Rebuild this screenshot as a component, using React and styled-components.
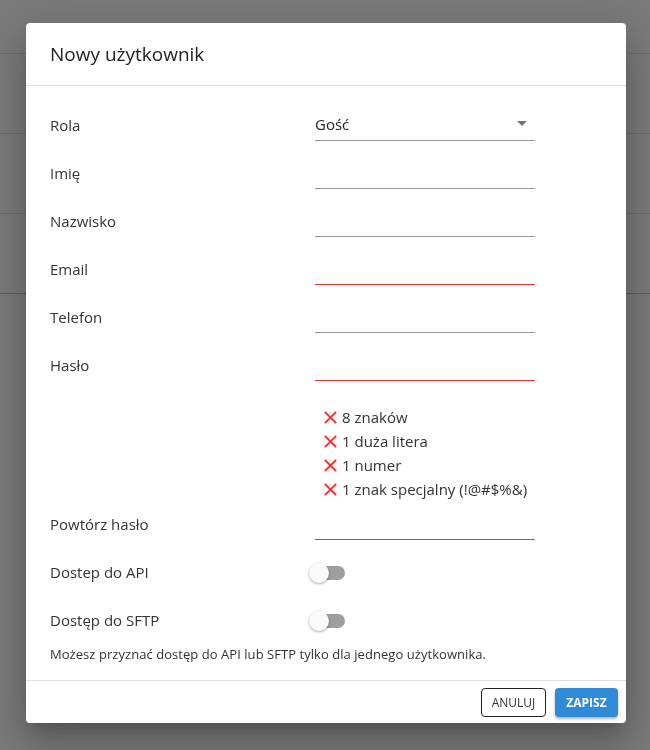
import React from 'react'
import styled, { createGlobalStyle } from 'styled-components'

const GlobalStyle = createGlobalStyle`
  html, body {
    margin: 0;
    padding: 0;
    height: 100%;
    background: #f4f4f4;
    font-family: 'Open Sans', 'Noto Sans', 'Liberation Sans', sans-serif;
    color: #333;
  }
  * { box-sizing: border-box; }
`

const fields = [
  { label: 'Imię', error: false },
  { label: 'Nazwisko', error: false },
  { label: 'Email', error: true },
  { label: 'Telefon', error: false },
  { label: 'Hasło', error: true },
]

const rules = ['8 znaków', '1 duża litera', '1 numer', '1 znak specjalny (!@#$%&)']

const Cross = () => (
  <svg width="15" height="15" viewBox="0 0 16 16">
    <path d="M2 2 L14 14 M14 2 L2 14" stroke="#e53935" strokeWidth="2.2" strokeLinecap="butt" />
  </svg>
)

const Caret = () => (
  <svg width="10" height="5" viewBox="0 0 10 5">
    <path d="M0 0 L10 0 L5 5 Z" fill="#757575" />
  </svg>
)

const App = () => (
  <>
    <GlobalStyle />
    <Page>
      <PageHead>
        <HeadCell>Właściciel</HeadCell>
      </PageHead>
      <PageRow />
      <PageRow />
      <PageRow dark />
    </Page>
    <Overlay>
      <Dialog>
        <Header>Nowy użytkownik</Header>
        <Body>
          <Row>
            <Label>Rola</Label>
            <Field>
              <Value>Gość</Value>
              <Caret />
            </Field>
          </Row>
          {fields.map((f) => (
            <Row key={f.label}>
              <Label>{f.label}</Label>
              <Field error={f.error} />
            </Row>
          ))}
          <Rules>
            {rules.map((r) => (
              <Rule key={r}>
                <Cross />
                <span>{r}</span>
              </Rule>
            ))}
          </Rules>
          <Row>
            <Label>Powtórz hasło</Label>
            <Field error />
          </Row>
          <Row>
            <Label>Dostep do API</Label>
            <Toggle>
              <Track />
              <Thumb />
            </Toggle>
          </Row>
          <Row>
            <Label>Dostęp do SFTP</Label>
            <Toggle>
              <Track />
              <Thumb />
            </Toggle>
          </Row>
          <Note>Możesz przyznać dostęp do API lub SFTP tylko dla jednego użytkownika.</Note>
        </Body>
        <Footer>
          <OutlineButton>ANULUJ</OutlineButton>
          <PrimaryButton>ZAPISZ</PrimaryButton>
        </Footer>
      </Dialog>
    </Overlay>
  </>
)

const Page = styled.div`
  display: flex;
  flex-direction: column;
`
const PageHead = styled.div`
  height: 54px;
  border-bottom: 1px solid #d8d8d8;
  display: flex;
  align-items: flex-start;
  padding: 20px 0 0 437px;
`
const HeadCell = styled.span`
  font-size: 12px;
  font-weight: 600;
  color: #222;
`
const PageRow = styled.div`
  height: 80px;
  border-bottom: 1px solid ${(p) => (p.dark ? '#bdbdbd' : '#d8d8d8')};
`
const Overlay = styled.div`
  position: fixed;
  inset: 0;
  background: rgba(0, 0, 0, 0.5);
  display: flex;
  align-items: flex-start;
  padding: 23px 0 0 26px;
`
const Dialog = styled.div`
  width: 600px;
  height: 700px;
  background: #fff;
  border-radius: 4px;
  box-shadow: 0 11px 15px -7px rgba(0, 0, 0, 0.2), 0 24px 38px 3px rgba(0, 0, 0, 0.14),
    0 9px 46px 8px rgba(0, 0, 0, 0.12);
  display: flex;
  flex-direction: column;
`
const Header = styled.div`
  height: 63px;
  padding: 0 24px 1px;
  display: flex;
  align-items: center;
  font-size: 19px;
  color: #222;
  border-bottom: 1px solid #e0e0e0;
`
const Body = styled.div`
  flex: 1;
  padding: 16px 24px 0;
  display: flex;
  flex-direction: column;
`
const Row = styled.div`
  height: 48px;
  display: grid;
  grid-template-columns: 265px 220px;
  align-items: center;
`
const Label = styled.span`
  font-size: 15px;
  color: #333;
  margin-bottom: 2px;
`
const Field = styled.div`
  height: 30px;
  border-bottom: 1px solid ${(p) => (p.error ? '#e53935' : '#949494')};
  display: flex;
  align-items: center;
  justify-content: space-between;
  padding: 0 8px 4px 0;
`
const Value = styled.span`
  font-size: 15px;
  color: #222;
`
const Rules = styled.div`
  margin: 15px 0 0 273px;
  display: flex;
  flex-direction: column;
`
const Rule = styled.div`
  height: 24px;
  display: flex;
  align-items: center;
  gap: 4px;
  font-size: 15px;
  color: #333;
`
const Toggle = styled.div`
  position: relative;
  width: 36px;
  height: 20px;
  margin-left: -6px;
  display: flex;
  align-items: center;
`
const Track = styled.div`
  width: 34px;
  height: 14px;
  margin-left: 2px;
  border-radius: 7px;
  background: #9e9e9e;
`
const Thumb = styled.div`
  position: absolute;
  left: 0;
  top: 0;
  width: 20px;
  height: 20px;
  border-radius: 50%;
  background: #fafafa;
  box-shadow: 0 1px 3px rgba(0, 0, 0, 0.35);
`
const Note = styled.div`
  font-size: 13px;
  letter-spacing: 0.05px;
  color: #333;
  margin-top: 0;
  line-height: 18px;
`
const Footer = styled.div`
  height: 43px;
  border-top: 1px solid #e0e0e0;
  display: flex;
  align-items: center;
  justify-content: flex-end;
  gap: 9px;
  padding: 0 8px;
`
const OutlineButton = styled.button`
  height: 29px;
  width: 65px;
  padding: 0;
  border: 1px solid #222;
  border-radius: 4px;
  background: #fff;
  font-family: inherit;
  font-size: 12px;
  color: #333;
`
const PrimaryButton = styled.button`
  height: 29px;
  width: 63px;
  padding: 0;
  border: none;
  border-radius: 4px;
  background: #2f8ad8;
  color: #fff;
  font-family: inherit;
  font-size: 12px;
  font-weight: 700;
  box-shadow: 0 2px 3px rgba(0, 0, 0, 0.3);
`

export default App
